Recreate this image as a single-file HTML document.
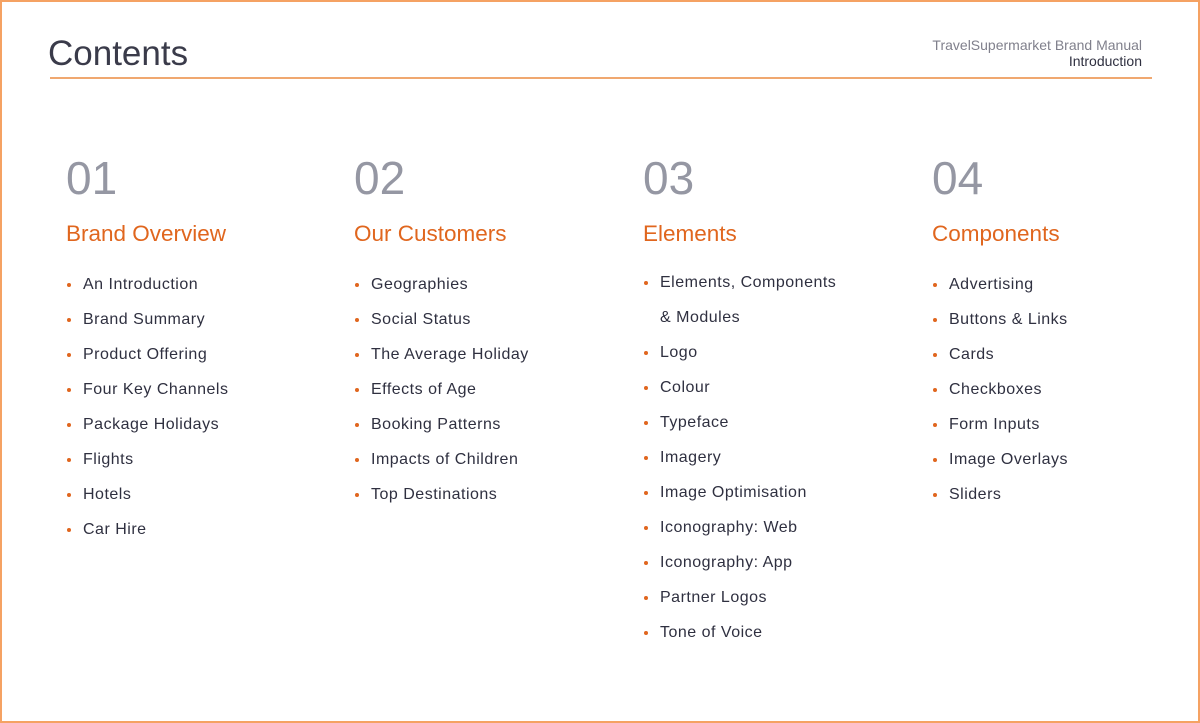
<!DOCTYPE html>
<html><head><meta charset="utf-8"><style>
*{margin:0;padding:0;box-sizing:border-box}
html,body{width:1200px;height:723px;overflow:hidden;background:#fff}
body{position:relative;font-family:"Liberation Sans",sans-serif;border:2px solid #f5a263}
.title{position:absolute;left:46px;top:32px;font-size:35px;color:#3a3b4a;letter-spacing:0px}
.meta{position:absolute;right:56px;top:35px;text-align:right;font-size:14px;line-height:16px;color:#80808c}
.meta b{font-weight:normal;color:#2f3040}
.rule{position:absolute;left:48px;top:75px;width:1102px;height:2px;background:#f0a870}
.col{position:absolute;top:148px}
.num{font-size:46px;color:#9597a3;line-height:56px;letter-spacing:0px}
.h{font-size:22.5px;color:#e0661e;margin-top:13px;line-height:30px}
ul{list-style:none;margin-top:18px}
li{position:relative;padding-left:17px;font-size:16px;color:#2f3040;line-height:35px;letter-spacing:0.5px}
li:before{content:"";position:absolute;left:1px;top:16px;width:4px;height:4px;border-radius:50%;background:#e0661e}
</style></head><body>
<div class="title">Contents</div>
<div class="meta">TravelSupermarket Brand Manual<br><b>Introduction</b></div>
<div class="rule"></div>
<div class="col" style="left:64px"><div class="num">01</div><div class="h">Brand Overview</div>
<ul><li>An Introduction</li><li>Brand Summary</li><li>Product Offering</li><li>Four Key Channels</li><li>Package Holidays</li><li>Flights</li><li>Hotels</li><li>Car Hire</li></ul></div>
<div class="col" style="left:352px"><div class="num">02</div><div class="h">Our Customers</div>
<ul><li>Geographies</li><li>Social Status</li><li>The Average Holiday</li><li>Effects of Age</li><li>Booking Patterns</li><li>Impacts of Children</li><li>Top Destinations</li></ul></div>
<div class="col" style="left:641px"><div class="num">03</div><div class="h">Elements</div>
<ul style="margin-top:16px"><li>Elements, Components<br>&amp; Modules</li><li>Logo</li><li>Colour</li><li>Typeface</li><li>Imagery</li><li>Image Optimisation</li><li>Iconography: Web</li><li>Iconography: App</li><li>Partner Logos</li><li>Tone of Voice</li></ul></div>
<div class="col" style="left:930px"><div class="num">04</div><div class="h">Components</div>
<ul><li>Advertising</li><li>Buttons &amp; Links</li><li>Cards</li><li>Checkboxes</li><li>Form Inputs</li><li>Image Overlays</li><li>Sliders</li></ul></div>
</body></html>
